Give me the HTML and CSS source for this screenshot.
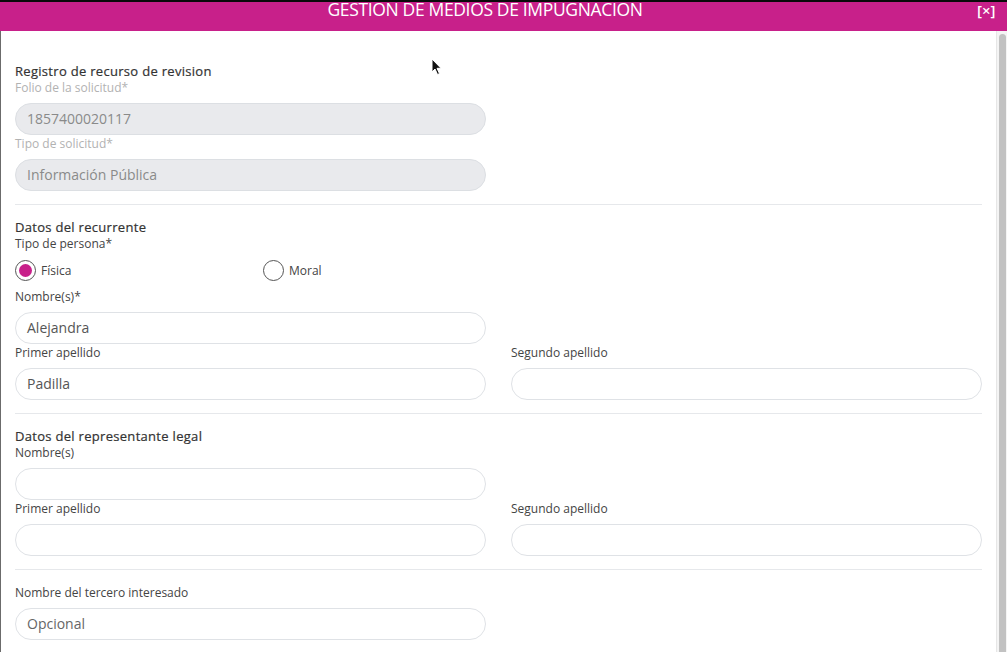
FILE: index.html
```html
<!DOCTYPE html>
<html lang="es">
<head>
<meta charset="utf-8">
<title>Gestión de medios de impugnación</title>
<link rel="stylesheet" href="styles.css">
</head>
<body>
<div class="modal">
  <header class="modal-header">
    <h1 class="modal-title">GESTIÓN DE MEDIOS DE IMPUGNACIÓN</h1>
    <span class="modal-close">[×]</span>
  </header>
  <div class="modal-frame">
    <main class="modal-body">
      <section class="section">
        <h2 class="section-title">Registro de recurso de revision</h2>
        <label class="field-label muted">Folio de la solicitud*</label>
        <div class="half"><div class="input disabled">1857400020117</div></div>
        <label class="field-label muted">Tipo de solicitud*</label>
        <div class="half"><div class="input disabled">Información Pública</div></div>
      </section>
      <hr class="divider">
      <section class="section">
        <h2 class="section-title">Datos del recurrente</h2>
        <label class="field-label">Tipo de persona*</label>
        <div class="radio-half">
          <div class="radio-row">
            <div class="radio-item"><span class="radio checked"></span><span class="radio-text">Física</span></div>
            <div class="radio-item"><span class="radio"></span><span class="radio-text">Moral</span></div>
          </div>
        </div>
        <label class="field-label">Nombre(s)*</label>
        <div class="half"><div class="input">Alejandra</div></div>
        <div class="two-cols">
          <div class="col">
            <label class="field-label">Primer apellido</label>
            <div class="input">Padilla</div>
          </div>
          <div class="col">
            <label class="field-label">Segundo apellido</label>
            <div class="input"></div>
          </div>
        </div>
      </section>
      <hr class="divider">
      <section class="section">
        <h2 class="section-title">Datos del representante legal</h2>
        <label class="field-label">Nombre(s)</label>
        <div class="half"><div class="input"></div></div>
        <div class="two-cols">
          <div class="col">
            <label class="field-label">Primer apellido</label>
            <div class="input"></div>
          </div>
          <div class="col">
            <label class="field-label">Segundo apellido</label>
            <div class="input"></div>
          </div>
        </div>
      </section>
      <hr class="divider">
      <section class="section">
        <label class="field-label">Nombre del tercero interesado</label>
        <div class="half"><div class="input placeholder">Opcional</div></div>
      </section>
      <hr class="divider">
      <svg class="cursor" width="12" height="18" viewBox="0 0 12 18"><path d="M1 1 L1 14 L4 11 L6.5 16.5 L8.5 15.6 L6 10.3 L10 10.3 Z" fill="#111" stroke="#fff" stroke-width="1"/></svg>
    </main>
    <div class="scrollbar"><div class="scroll-thumb"></div></div>
  </div>
</div>
</body>
</html>
```
FILE: styles.css
```css
* { box-sizing: border-box; }
html, body { margin: 0; padding: 0; height: 100%; overflow: hidden; background: #fff; }
body { font-family: "Open Sans", "Liberation Sans", sans-serif; color: #444; }

.modal { display: flex; flex-direction: column; height: 652px; }

.modal-header {
  height: 31px;
  flex: 0 0 31px;
  background: #c8208a;
  border-top: 2px solid #0a0a0a;
  display: flex;
  align-items: flex-start;
  padding-right: 13px;
  overflow: hidden;
}
.modal-title {
  flex: 1;
  margin: -2px 0 0 0;
  text-align: center;
  color: #fff;
  font-size: 17.5px;
  line-height: 18px;
  font-weight: 400;
  letter-spacing: -0.35px;
}
.modal-close {
  margin-left: 7px;
  margin-top: 0;
  color: #fff;
  font-size: 15px;
  line-height: 17px;
  font-weight: 600;
  width: 17px;
}

.modal-frame { flex: 1; display: flex; min-height: 0; }
.modal-body {
  position: relative;
  flex: 1;
  border-left: 1px solid #6b6b6b;
  padding: 32px 14px 0 14px;
  overflow: hidden;
}
.scrollbar {
  width: 11px;
  flex: 0 0 11px;
  background: #f4f4f4;
  border-left: 1px solid #e6e6e6;
  padding: 3px 1px 0 2px;
}
.scroll-thumb {
  height: 100%;
  background: #c2c2c2;
  border-radius: 4px 4px 0 0;
}

.section { display: flex; flex-direction: column; }
.section-title {
  margin: 0;
  font-size: 13px;
  line-height: 16px;
  font-weight: 500;
  color: #333;
  letter-spacing: 0.3px;
  -webkit-text-stroke: 0.2px #333;
}
.field-label {
  display: block;
  font-size: 12px;
  line-height: 16px;
  padding-top: 1px;
  color: #444;
}
.field-label.muted { color: #b2b2b2; }
.field-label + .half, .field-label + .input { margin-top: 7px; }
.half { width: 471px; }
.radio-half { width: 471px; }

.input {
  height: 32px;
  border: 1px solid #dfe2e6;
  border-radius: 16px;
  padding: 0 11px;
  font-size: 14px;
  line-height: 30px;
  color: #555;
  background: #fff;
}
.input.disabled { background: #e9eaed; color: #8a8a8a; border-color: #dcdfe3; }
.input.placeholder { color: #666; }

.two-cols { display: grid; grid-template-columns: 1fr 1fr; column-gap: 25px; }
.col { display: flex; flex-direction: column; }

.radio-row { display: grid; grid-template-columns: 1fr 1fr; column-gap: 25px; height: 36px; align-items: center; }
.radio-item { display: flex; align-items: center; gap: 5px; }
.radio {
  width: 21px; height: 21px;
  border: 1px solid #555;
  border-radius: 50%;
  display: flex; align-items: center; justify-content: center;
}
.radio.checked::after {
  content: "";
  width: 13px; height: 13px;
  border-radius: 50%;
  background: #c8208a;
}
.radio-text { font-size: 12px; color: #444; line-height: 16px; margin-top: 2px; }

.divider {
  border: 0;
  border-top: 1px solid #e6e8eb;
  margin: 13px 0 14px 0;
  height: 0;
}

.cursor { position: absolute; left: 430px; top: 27px; }
```
